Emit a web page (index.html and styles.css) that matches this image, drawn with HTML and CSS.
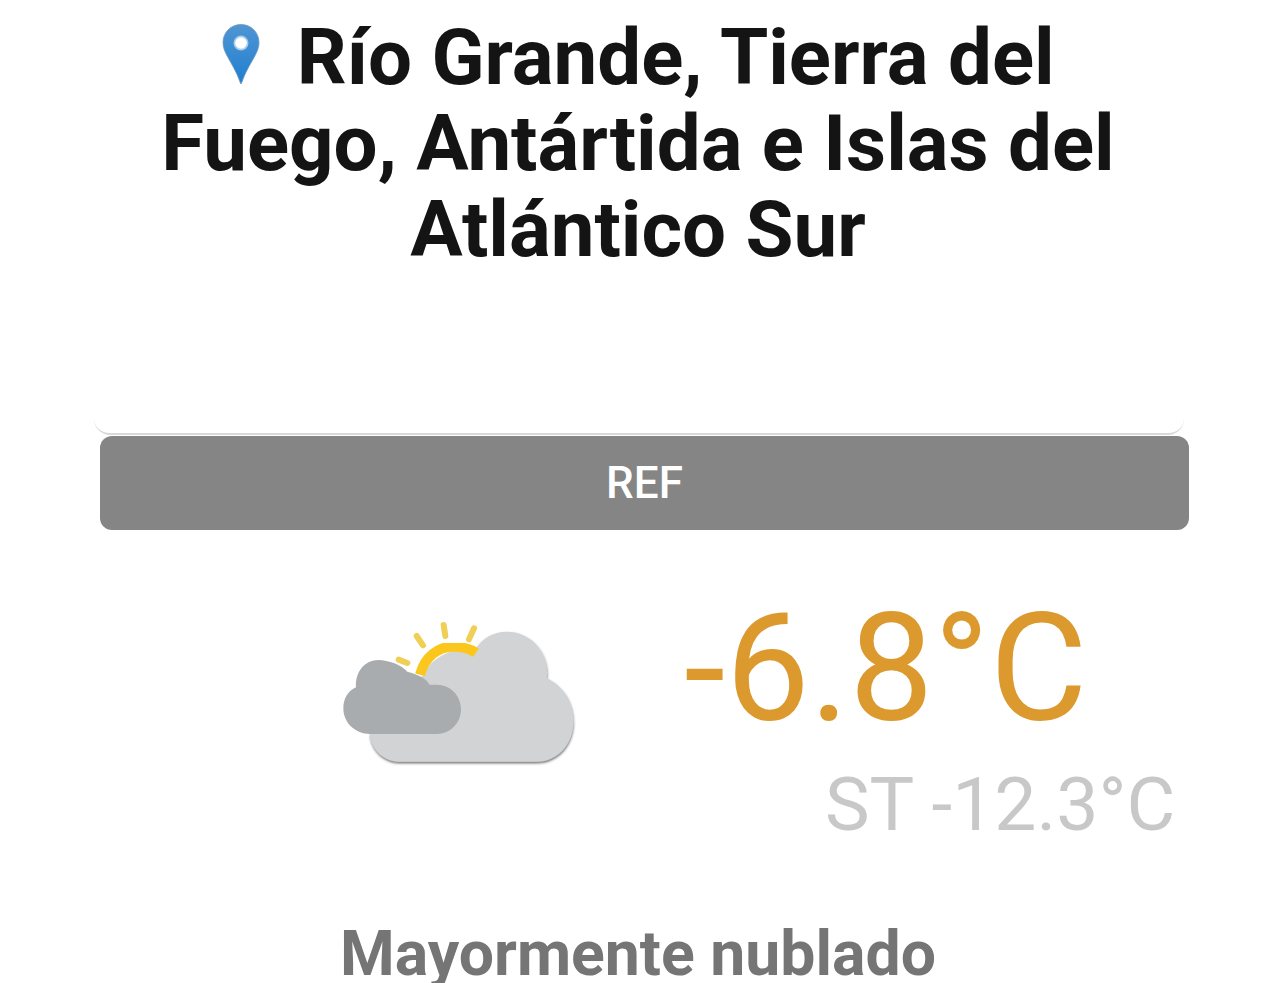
FILE: index.html
```html
<!DOCTYPE html>
<html lang="es">
<head>
<meta charset="utf-8">
<title>Río Grande</title>
<link rel="stylesheet" href="styles.css">
</head>
<body>
<main class="page">
  <h1 class="title">
    <svg class="pin" viewBox="0 0 40 62" aria-hidden="true">
      <defs><linearGradient id="pg" x1="0" y1="0" x2="0" y2="1"><stop offset="0" stop-color="#5095d3"/><stop offset="1" stop-color="#1f7fd0"/></linearGradient></defs>
      <path d="M20 1.500C9.800 1.500 2 9.500 2 19.500c0 5 1.800 9 4.200 13.500C10.500 41 16 49.500 19.600 60.500c.1.300.7.300.8 0C24 49.500 29.500 41 33.800 33 36.200 28.500 38 24.500 38 19.500 38 9.500 30.200 1.500 20 1.500Z" fill="url(#pg)" stroke="#6a97bf" stroke-width=".8"/>
      <circle cx="20" cy="20" r="7.500" fill="#a9cdec"/>
      <circle cx="20" cy="20" r="5.800" fill="#fff"/>
    </svg>
    <span class="pin-gap"></span>Río Grande, Tierra del Fuego, Antártida e Islas del Atlántico Sur
  </h1>
  <div class="search-edge"></div>
  <button class="ref">REF</button>
  <section class="weather">
    <svg class="icon" viewBox="0 0 840 570" aria-hidden="true">
      <defs>
        <filter id="sh" x="-5%" y="-5%" width="110%" height="115%"><feGaussianBlur in="SourceGraphic" stdDeviation="1.500" result="b"/><feDropShadow in="b" dx="1" dy="5" stdDeviation="3" flood-color="#4a4a4a" flood-opacity=".75"/></filter>
        <filter id="soft"><feGaussianBlur stdDeviation="2"/></filter>
      </defs>
      <g stroke="#efcf57" stroke-width="18" stroke-linecap="round" filter="url(#soft)">
        <path d="M236 179 262 189"/><path d="M290 108 309 136"/><path d="M371 75 376 108"/><path d="M462 85 447 118"/>
      </g>
      <path d="M235 485H650C715 485 760 430 760 365 760 300 725 255 680 235 690 160 635 95 560 95 520 95 485 115 465 150 420 140 340 160 310 225L150 400C150 445 190 485 235 485Z" fill="#d1d3d5" filter="url(#sh)"/>
      <path d="M300 224C314 170 355 139 400 140 425 140 450 146 468 158" fill="none" stroke="#fbc71e" stroke-width="30" filter="url(#soft)"/>
      <path d="M150 402H350C392 402 423 368 423 328 423 288 392 254 350 254H328C322 238 300 225 262 215 245 195 205 180 175 180 135 180 105 215 108 262 85 272 70 295 70 325 70 368 105 402 150 402Z" fill="#a9acaf" filter="url(#soft)"/>
    </svg>
    <div class="temps">
      <div class="temp">-6.8°C</div>
      <div class="feels">ST -12.3°C</div>
    </div>
  </section>
  <p class="status">Mayormente nublado</p>
</main>
</body>
</html>
```
FILE: styles.css
```css
html, body { margin: 0; padding: 0; background: #fff; height: 983px; overflow: hidden; }
.page { display: flex; flex-direction: column; font-family: Roboto, sans-serif; height: 983px; overflow: hidden; }
.title { margin: 15px 154px 0 150px; text-align: center; font-size: 78px; line-height: 86px; font-weight: 700; color: #141414; height: 258px; }
.pin { width: 40px; height: 62px; vertical-align: -1px; }
.pin-gap { display: inline-block; width: 16px; }
.search-edge { margin: 146px 0 0 94px; width: 1090px; height: 16px; border-bottom: 2px solid #d9d9d9; border-radius: 0 0 16px 16px; box-sizing: border-box; flex: none; }
.ref { margin: 1px 0 0 100px; width: 1089px; height: 94px; flex: none; background: #858585; border: 0; border-radius: 12px; color: #fff; font: 500 44px Roboto, sans-serif; padding: 0; }
.weather { display: flex; align-items: flex-start; margin: 62px 0 0 320px; flex: none; }
.icon { width: 280px; height: 190px; margin-top: 8px; flex: none; }
.temps { margin: 2px 0 0 84px; display: flex; flex-direction: column; }
.temp { font-size: 150px; line-height: 150px; color: #dc9a2e; white-space: nowrap; }
.feels { font-size: 75px; line-height: 84px; color: #c8c8c8; margin: 18px 0 0 141px; white-space: nowrap; }
.status { margin: 73px 0 0; text-align: center; font-size: 62.5px; line-height: 70px; font-weight: 700; color: #757575; padding-right: 4px; }
```
